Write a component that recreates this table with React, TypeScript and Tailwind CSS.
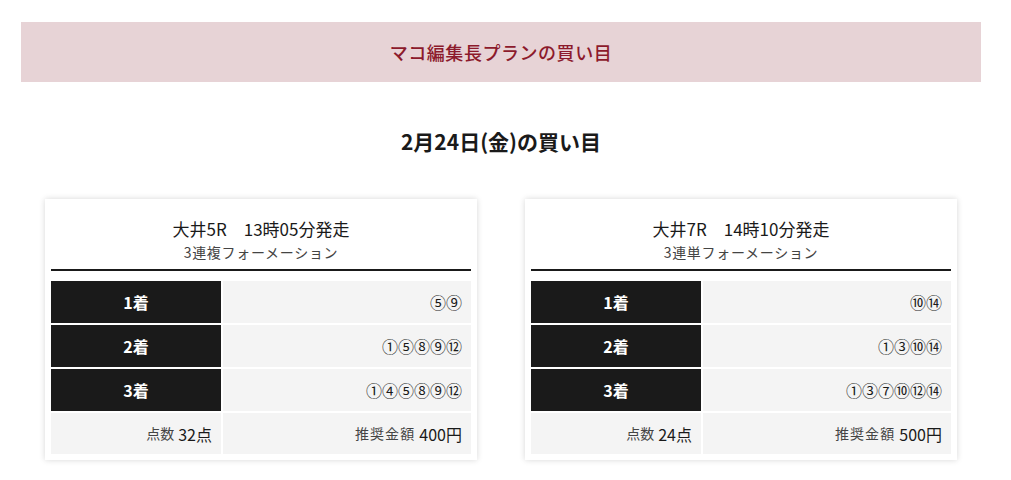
import React from "react";

type Card = {
  race: string;
  type: string;
  rows: { label: string; value: string }[];
  points: string;
  amount: string;
};

const cards: Card[] = [
  {
    race: "大井5R　13時05分発走",
    type: "3連複フォーメーション",
    rows: [
      { label: "1着", value: "⑤⑨" },
      { label: "2着", value: "①⑤⑧⑨⑫" },
      { label: "3着", value: "①④⑤⑧⑨⑫" },
    ],
    points: "32点",
    amount: "400円",
  },
  {
    race: "大井7R　14時10分発走",
    type: "3連単フォーメーション",
    rows: [
      { label: "1着", value: "⑩⑭" },
      { label: "2着", value: "①③⑩⑭" },
      { label: "3着", value: "①③⑦⑩⑫⑭" },
    ],
    points: "24点",
    amount: "500円",
  },
];

function BetCard({ c }: { c: Card }) {
  return (
    <div className="bg-white shadow-[0_0_6px_rgba(0,0,0,0.16)] px-[6px] pt-[19px] pb-[6px]">
      <div className="text-center text-[17px] leading-[22px] text-[#1a1a1a]">{c.race}</div>
      <div className="text-center text-[14px] leading-[20px] text-[#444] tracking-[0.05em] mt-[2px]">{c.type}</div>
      <div className="h-[2px] bg-[#1a1a1a] mt-[7px]" />
      <div className="mt-[10px] flex flex-col gap-[2px]">
        {c.rows.map((r) => (
          <div key={r.label} className="flex gap-[2px] h-[42px]">
            <div className="w-[170px] bg-[#1a1a1a] text-white font-bold text-[16px] flex items-center justify-center">
              {r.label}
            </div>
            <div className="flex-1 bg-[#f4f4f4] flex items-center justify-end pr-[9px] text-[16px] text-[#1a1a1a]">
              {r.value}
            </div>
          </div>
        ))}
        <div className="flex gap-[2px] h-[41px]">
          <div className="w-[170px] bg-[#f4f4f4] flex items-center justify-end pr-[9px] text-[#1a1a1a]">
            <span className="text-[14px] text-[#444] mr-[4px]">点数</span>
            <span className="text-[16px]">{c.points}</span>
          </div>
          <div className="flex-1 bg-[#f4f4f4] flex items-center justify-end pr-[9px] text-[#1a1a1a]">
            <span className="text-[14px] text-[#444] mr-[4px] tracking-[0.08em]">推奨金額</span>
            <span className="text-[16px]">{c.amount}</span>
          </div>
        </div>
      </div>
    </div>
  );
}

export default function App() {
  return (
    <div
      className="bg-white min-h-[480px] pt-[22px]"
      style={{ fontFamily: '"Noto Sans CJK JP", "Noto Sans", sans-serif' }}
    >
      <div className="ml-[21px] w-[960px]">
        <div className="h-[60px] bg-[#e7d3d6] flex items-center justify-center text-[#8c1a2c] text-[18px] font-medium tracking-[0.03em]">
          マコ編集長プランの買い目
        </div>
        <div className="mt-[45px] text-center text-[21px] font-bold text-[#1a1a1a] leading-[28px]">
          2月24日(金)の買い目
        </div>
        <div className="mt-[44px] px-[24px] grid grid-cols-2 gap-[48px]">
          {cards.map((c) => (
            <BetCard key={c.race} c={c} />
          ))}
        </div>
      </div>
    </div>
  );
}
